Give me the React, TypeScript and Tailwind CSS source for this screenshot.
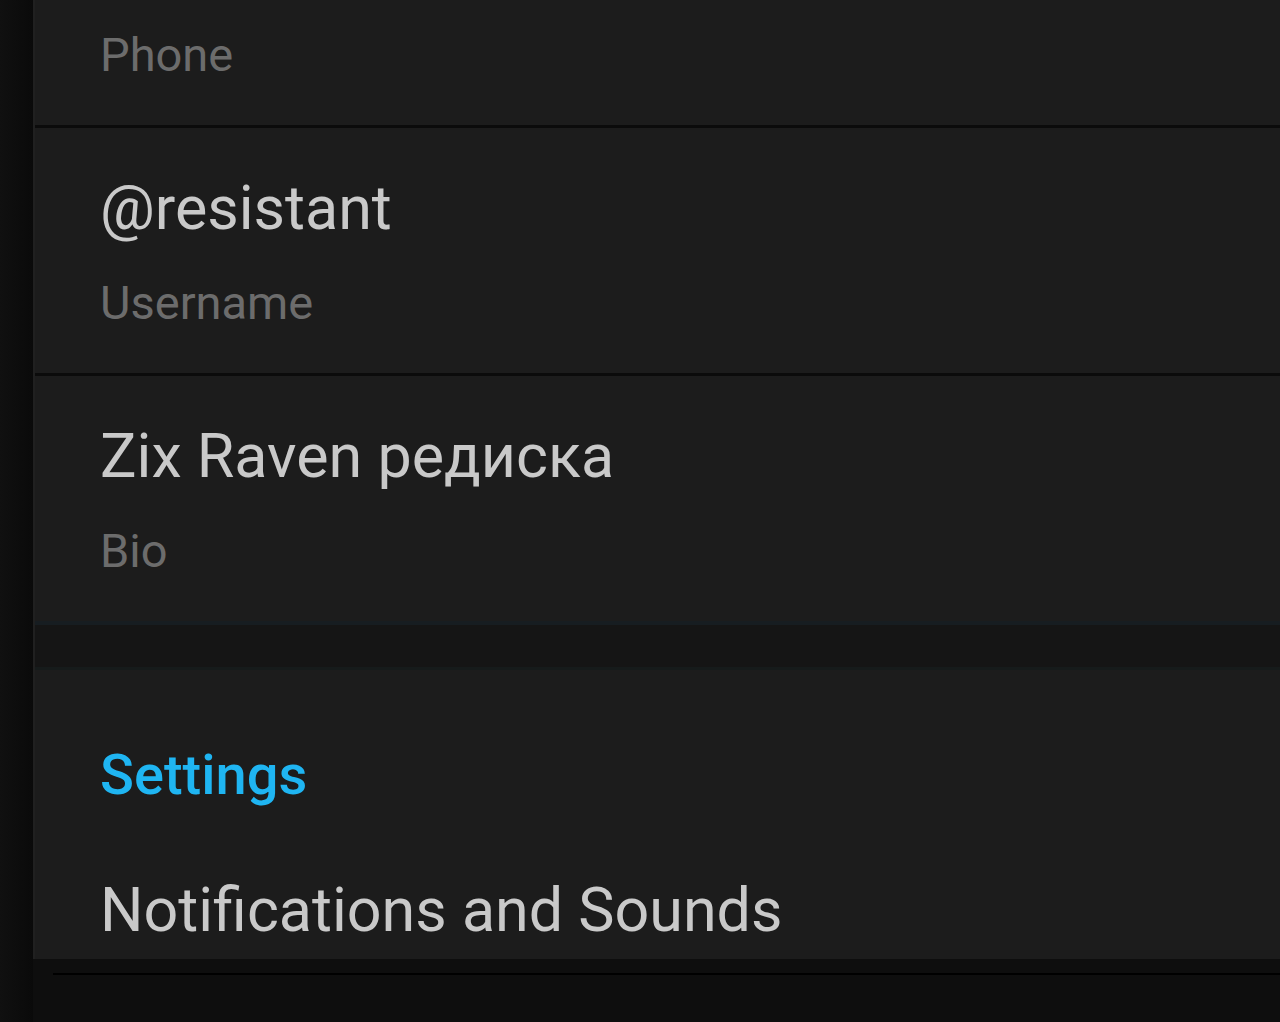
import React from "react";

interface Field {
  value: string;
  label: string;
}

const fields: Field[] = [
  { value: "+7 (912) 345 67 89", label: "Phone" },
  { value: "@resistant", label: "Username" },
  { value: "Zix Raven редиска", label: "Bio" },
];

const FieldRow: React.FC<{ field: Field; cut?: boolean; last?: boolean }> = ({ field, cut, last }) => {
  return (
    <div
      className={
        "flex flex-col justify-end overflow-hidden pl-[65px] pt-[45px] " +
        (cut ? "h-[128px] " : last ? "h-[245px] " : "h-[248px] ") +
        (last ? "pb-[43px]" : "pb-[43px] border-b-[3px] border-[#0b0b0b]")
      }
    >
      <div className="text-[61px] leading-[72px] text-[#c9c9c9] whitespace-nowrap">{field.value}</div>
      <div className="mt-[32px] text-[47px] leading-[54px] text-[#6c6c6c]">{field.label}</div>
    </div>
  );
};

const App = () => {
  return (
    <div className="h-[1022px] w-[1280px] overflow-hidden bg-[#0e0e0e] flex font-['Roboto','Noto_Sans',sans-serif]">
      <div className="w-[33px] shrink-0 bg-gradient-to-r from-[#101010] to-[#0a0a0a]" />
      <div className="flex-1 flex flex-col">
        <div className="bg-[#1c1c1c] border-l-[2px] border-[#202020]">
          {fields.map((f, i) => (
            <FieldRow key={i} field={f} cut={i === 0} last={i === fields.length - 1} />
          ))}
          <div className="h-[49px] bg-[#151515] border-t-[4px] border-[#171d21] border-b-[3px] border-b-[#161b1b]" />
          <div className="pl-[65px] pt-[73px] pb-[13px]">
            <div className="text-[56px] leading-[64px] font-medium text-[#1fb5f2]">Settings</div>
            <div className="mt-[67px] text-[61px] leading-[72px] text-[#c9c9c9]">Notifications and Sounds</div>
          </div>
        </div>
        <div className="pl-[20px] pt-[14px]">
          <div className="h-[2px] bg-black" />
        </div>
      </div>
    </div>
  );
};

export default App;
